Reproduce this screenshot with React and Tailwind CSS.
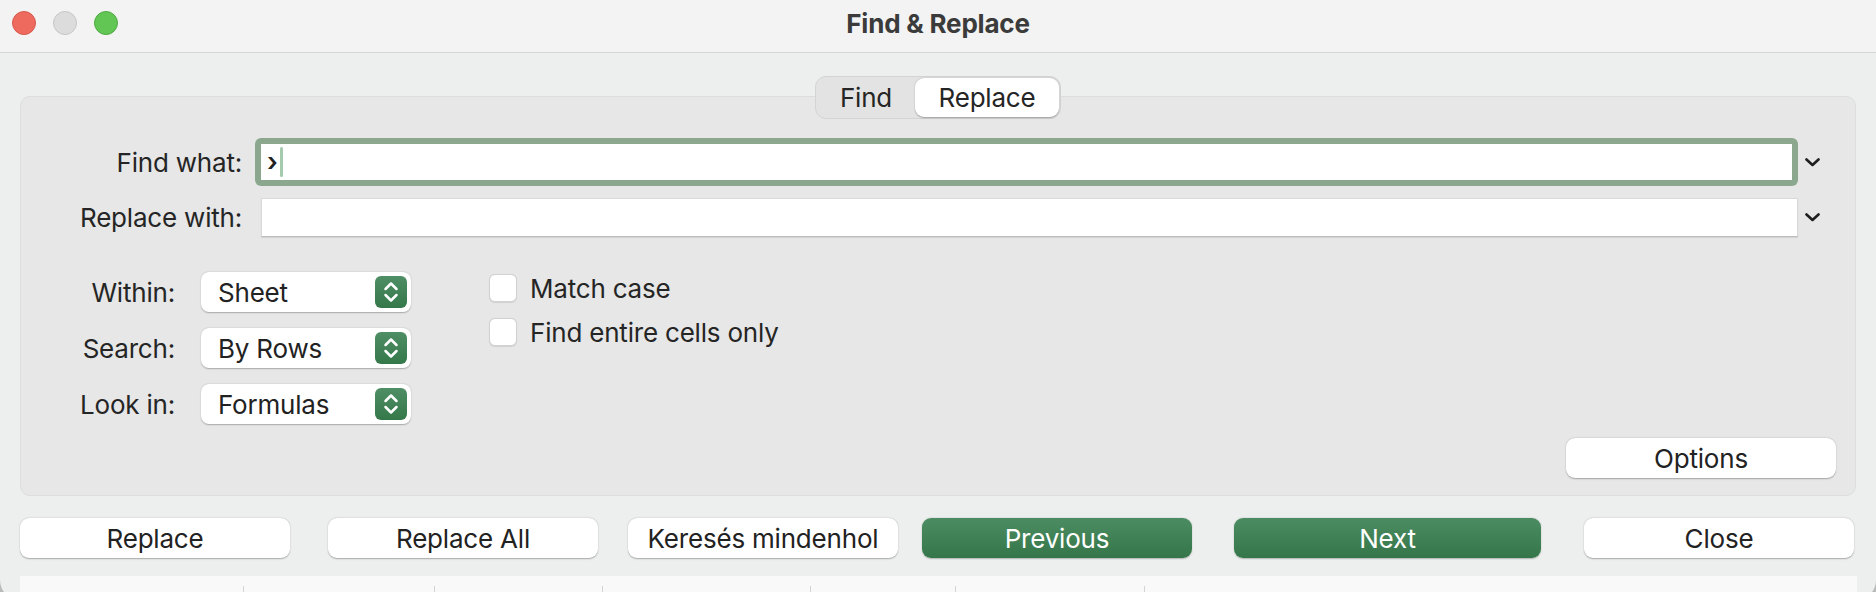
import React from 'react';

const Chevron = () => (
  <svg width="15" height="9" viewBox="0 0 15 9" fill="none">
    <path d="M1.5 1.5 L7.5 7 L13.5 1.5" stroke="#1f1f1f" strokeWidth="2.6" strokeLinecap="round" strokeLinejoin="round" />
  </svg>
);

const Stepper = () => (
  <div className="w-[32px] h-[32px] rounded-[6px] bg-gradient-to-b from-[#4f8e65] to-[#347849] flex items-center justify-center">
    <svg width="18" height="24" viewBox="0 0 18 24" fill="none">
      <path d="M3.5 9 L9 3.5 L14.5 9" stroke="#fff" strokeWidth="2.5" strokeLinecap="round" strokeLinejoin="round" />
      <path d="M3.5 15 L9 20.5 L14.5 15" stroke="#fff" strokeWidth="2.5" strokeLinecap="round" strokeLinejoin="round" />
    </svg>
  </div>
);

const SelectRow = ({ label, value }) => (
  <div className="flex items-center h-[40px]">
    <div className="w-[154px] text-right text-[26px] text-[#252525]">{label}</div>
    <div className="ml-[26px] w-[210px] h-[40px] bg-white rounded-[8px] shadow-[0_0.5px_1.5px_rgba(0,0,0,0.28)] flex items-center justify-between pl-[17px] pr-[4px]">
      <span className="text-[26px] text-[#222]">{value}</span>
      <Stepper />
    </div>
  </div>
);

const CheckRow = ({ label }) => (
  <div className="flex items-center h-[28px]">
    <div className="w-[28px] h-[28px] bg-white rounded-[6px] border border-[#d2d2d2] shadow-[0_0.5px_1px_rgba(0,0,0,0.1)]" />
    <span className="ml-[13px] text-[26px] text-[#252525]">{label}</span>
  </div>
);

const WhiteButton = ({ children, className = '' }) => (
  <button className={`h-[40px] bg-white rounded-[9px] shadow-[0_0.5px_1.5px_rgba(0,0,0,0.3)] text-[26px] text-[#222] flex items-center justify-center ${className}`}>
    {children}
  </button>
);

const GreenButton = ({ children, className = '' }) => (
  <button className={`h-[40px] rounded-[9px] bg-gradient-to-b from-[#4c8c62] to-[#34764a] shadow-[0_0.5px_1.5px_rgba(0,0,0,0.25)] text-[26px] text-white flex items-center justify-center ${className}`}>
    {children}
  </button>
);

export default function App() {
  const gridLines = [243, 434, 602, 810, 955, 1144];

  return (
    <div className="w-[1876px] h-[592px] bg-[#b9b9b9] overflow-hidden tracking-[-0.2px]" style={{ fontFamily: 'Inter, "Noto Sans", sans-serif' }}>
      <div className="w-full bg-[#edefee] rounded-b-[20px]">
        {/* title bar */}
        <div className="h-[53px] bg-[#f2f3f2] border-b border-[#d5d6d5] grid grid-cols-[1fr_auto_1fr] items-center pb-[6px]">
          <div className="flex items-center gap-[17px] pl-[12px]">
            <span className="w-[24px] h-[24px] rounded-full bg-[#ee6a5f] border border-[#d9574c]" />
            <span className="w-[24px] h-[24px] rounded-full bg-[#dcdcdc] border border-[#c6c6c6]" />
            <span className="w-[24px] h-[24px] rounded-full bg-[#62c655] border border-[#50aa43]" />
          </div>
          <div className="text-[26px] font-bold text-[#3b3b3b]">Find &amp; Replace</div>
          <div />
        </div>

        <div className="px-[20px]">
          {/* panel */}
          <div className="mt-[43px] bg-[#e6e7e6] border border-[#dcdedc] rounded-[10px] flex flex-col">
            {/* tabs */}
            <div className="-mt-[21px] flex justify-center">
              <div className="flex items-center h-[43px] p-[1px] bg-[#e2e3e2] border border-[#d3d4d3] rounded-[11px]">
                <div className="w-[98px] h-[39px] flex items-center justify-center text-[26px] text-[#252525]">Find</div>
                <div className="w-[144px] h-[39px] bg-white rounded-[9px] shadow-[0_0.5px_1.5px_rgba(0,0,0,0.3)] flex items-center justify-center text-[26px] text-[#252525]">Replace</div>
              </div>
            </div>

            {/* find what */}
            <div className="mt-[19px] flex items-center pr-[32px]">
              <div className="w-[221px] text-right text-[26px] text-[#252525]">Find what:</div>
              <div className="ml-[13px] flex-1 h-[48px] bg-[#8ba88e] rounded-[6px] p-[6px] -mr-[6px]">
                <div className="h-full bg-white flex items-center pl-[6px]">
                  <span className="text-[26px] font-semibold text-[#222] leading-none">›</span>
                  <span className="ml-[2px] w-[3px] h-[30px] rounded-full bg-[#a4cbad]" />
                </div>
              </div>
              <div className="w-[31px] flex justify-end pr-[3px]"><Chevron /></div>
            </div>

            {/* replace with */}
            <div className="mt-[12px] flex items-center pr-[32px]">
              <div className="w-[221px] text-right text-[26px] text-[#252525]">Replace with:</div>
              <div className="ml-[19px] flex-1 h-[39px] bg-white border border-[#d9d9d9] border-b-[#bdbdbd] shadow-[0_1px_1px_rgba(0,0,0,0.08)]" />
              <div className="w-[25px] flex justify-end pr-[3px]"><Chevron /></div>
            </div>

            {/* options */}
            <div className="mt-[35px] flex">
              <div className="flex flex-col gap-[16px]">
                <SelectRow label="Within:" value="Sheet" />
                <SelectRow label="Search:" value="By Rows" />
                <SelectRow label="Look in:" value="Formulas" />
              </div>
              <div className="ml-[78px] mt-[2px] flex flex-col gap-[16px]">
                <CheckRow label="Match case" />
                <CheckRow label="Find entire cells only" />
              </div>
            </div>

            <div className="mt-[14px] mb-[17px] flex justify-end pr-[19px]">
              <WhiteButton className="w-[270px]">Options</WhiteButton>
            </div>
          </div>

          {/* bottom buttons */}
          <div className="mt-[22px] flex items-center">
            <WhiteButton className="w-[270px]">Replace</WhiteButton>
            <WhiteButton className="w-[270px] ml-[38px]">Replace All</WhiteButton>
            <WhiteButton className="w-[270px] ml-[30px]">Keresés mindenhol</WhiteButton>
            <GreenButton className="w-[270px] ml-[24px]">Previous</GreenButton>
            <GreenButton className="w-[307px] ml-[42px]">Next</GreenButton>
            <WhiteButton className="w-[270px] ml-[43px]">Close</WhiteButton>
          </div>

          {/* sheet strip behind */}
          <div className="mt-[18px] h-[24px] bg-[#f9f9f9] relative -mr-[1px]">
            {gridLines.map((x) => (
              <div key={x} className="absolute top-[10px] bottom-0 w-px bg-[#d4d4d4]" style={{ left: x - 20 }} />
            ))}
          </div>
        </div>
      </div>
    </div>
  );
}
